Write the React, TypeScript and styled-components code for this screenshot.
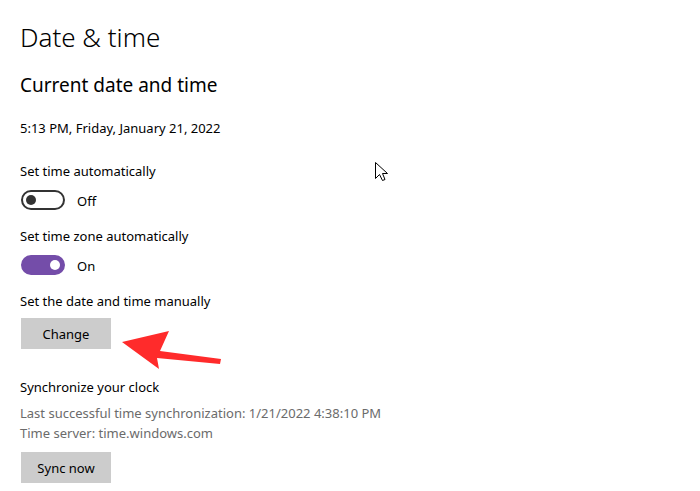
import React from "react";
import styled, { createGlobalStyle } from "styled-components";

const Global = createGlobalStyle`
  html, body { margin: 0; padding: 0; background: #fff; }
  body { font-family: "Noto Sans", "Open Sans", sans-serif; color: #000; }
`;

const Page = styled.div`
  position: relative;
  width: 700px;
  height: 491px;
  overflow: hidden;
  padding: 19px 0 0 20px;
  box-sizing: border-box;
  display: flex;
  flex-direction: column;
  align-items: flex-start;
`;

const Title = styled.h1`
  margin: 0;
  font-size: 26px;
  font-weight: 300;
  line-height: 36px;
  color: #000;
`;

const Section = styled.h2`
  margin: 16px 0 0;
  font-size: 19px;
  font-weight: 400;
  line-height: 28px;
`;

const Text = styled.div<{ $mt?: number; $muted?: boolean }>`
  margin-top: ${(p) => p.$mt ?? 0}px;
  font-size: 13px;
  line-height: 20px;
  color: ${(p) => (p.$muted ? "#6b6b6b" : "#000")};
`;

const ToggleRow = styled.div`
  margin-top: 9px;
  display: flex;
  align-items: center;
  gap: 12px;
  height: 20px;
  margin-left: 1px;
`;

const Track = styled.div<{ $on: boolean }>`
  width: 44px;
  height: 20px;
  box-sizing: border-box;
  border-radius: 10px;
  border: 2px solid ${(p) => (p.$on ? "#744da9" : "#333")};
  background: ${(p) => (p.$on ? "#744da9" : "#fff")};
  display: flex;
  align-items: center;
  justify-content: ${(p) => (p.$on ? "flex-end" : "flex-start")};
  padding: 0 3px;
`;

const Knob = styled.div<{ $on: boolean }>`
  width: 10px;
  height: 10px;
  border-radius: 50%;
  background: ${(p) => (p.$on ? "#fff" : "#333")};
`;

const ToggleLabel = styled.span`
  font-size: 13px;
  line-height: 20px;
  padding-top: 1px;
`;

const Button = styled.button<{ $mt: number }>`
  margin-top: ${(p) => p.$mt}px;
  margin-left: 1px;
  width: 90px;
  height: 31px;
  border: none;
  background: #cccccc;
  font-family: inherit;
  font-size: 13px;
  color: #000;
  padding: 0;
`;

const Overlay = styled.svg`
  position: absolute;
  left: 0;
  top: 0;
  pointer-events: none;
`;

const Toggle = ({ on, label }: { on: boolean; label: string }) => (
  <ToggleRow>
    <Track $on={on}>
      <Knob $on={on} />
    </Track>
    <ToggleLabel>{label}</ToggleLabel>
  </ToggleRow>
);

export default function App() {
  return (
    <>
      <Global />
      <Page>
        <Title>Date &amp; time</Title>
        <Section>Current date and time</Section>
        <Text $mt={19}>5:13 PM, Friday, January 21, 2022</Text>
        <Text $mt={23}>Set time automatically</Text>
        <Toggle on={false} label="Off" />
        <Text $mt={16}>Set time zone automatically</Text>
        <Toggle on={true} label="On" />
        <Text $mt={16}>Set the date and time manually</Text>
        <Button $mt={7}>Change</Button>
        <Text $mt={28}>Synchronize your clock</Text>
        <Text $mt={6} $muted>
          Last successful time synchronization: 1/21/2022 4:38:10 PM
        </Text>
        <Text $muted>Time server: time.windows.com</Text>
        <Button $mt={9}>Sync now</Button>
        <Overlay width="700" height="491" viewBox="0 0 700 491">
          <polygon
            points="122,342 169,331 160,351 221,359 220,364 157,358 159,369"
            fill="#ff2b2b"
          />
          <path
            d="M375.5 162.5 L375.5 178.5 L379.5 174.5 L382.5 180.5 L385 179.5 L382.5 173.5 L387.5 173.5 Z"
            fill="#fff"
            stroke="#000"
            strokeWidth="1"
            strokeLinejoin="miter"
          />
        </Overlay>
      </Page>
    </>
  );
}
